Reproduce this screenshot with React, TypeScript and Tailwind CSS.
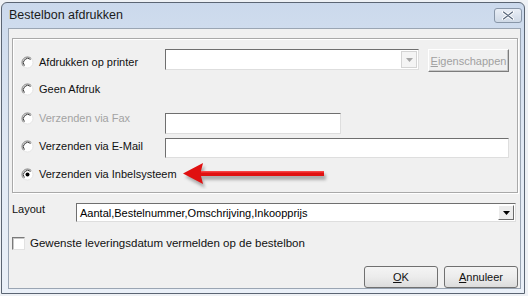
import React from 'react';

const font = "font-['Liberation_Sans',Arial,sans-serif]";
const sunken = 'border border-t-[#6f6f6f] border-l-[#6f6f6f] border-r-[#dedede] border-b-[#dedede] bg-white';

function Radio({ checked = false }: { checked?: boolean }) {
  return (
    <svg width="13" height="13" viewBox="0 0 13 13" className="shrink-0">
      <circle cx="6.5" cy="6.5" r="5.5" fill="#ffffff" />
      <path d="M2.6 10.4 A5.5 5.5 0 0 1 10.4 2.6" stroke="#7a7a7a" strokeWidth="1" fill="none" />
      <path d="M3.4 9.6 A4.4 4.4 0 0 1 9.6 3.4" stroke="#3a3a3a" strokeWidth="1" fill="none" />
      <path d="M10.4 2.6 A5.5 5.5 0 0 1 2.6 10.4" stroke="#e4e4e4" strokeWidth="1" fill="none" />
      {checked && <circle cx="6.5" cy="6.5" r="2" fill="#000000" />}
    </svg>
  );
}

function RadioLabel({ label, checked, disabled }: { label: string; checked?: boolean; disabled?: boolean }) {
  return (
    <div className="flex items-center gap-[5px] h-[14px]">
      <Radio checked={checked} />
      <span className={`text-[11px] leading-[14px] whitespace-nowrap ${disabled ? 'text-[#a3a3a3]' : 'text-[#111]'}`}>{label}</span>
    </div>
  );
}

function Triangle({ color }: { color: string }) {
  return (
    <svg width="7" height="4" viewBox="0 0 7 4">
      <path d="M0 0 H7 L3.5 4 Z" fill={color} />
    </svg>
  );
}

export default function App() {
  return (
    <div className={`w-[528px] h-[296px] bg-[#eef1f5] overflow-hidden ${font}`}>
      <div className="ml-[1px] mt-[2px] w-[524px] h-[292px] border border-[#5b6573] rounded-t-[6px] bg-gradient-to-b from-[#cbd9ec] via-[#e1e9f4] to-[#eaf0f8] flex flex-col">
        {/* title bar */}
        <div className="h-[25px] shrink-0 flex items-start justify-between pl-[7px] pr-[2px]">
          <span className="text-[12.5px] text-[#1b1b1b] mt-[5px] leading-[15px]">Bestelbon afdrukken</span>
          <div className="w-[28px] h-[15px] mt-[5px] rounded-[3px] border border-[#8896a8] bg-gradient-to-b from-[#e9eef6] to-[#cfd9e6] flex items-center justify-center">
            <svg width="12" height="9" viewBox="0 0 12 9">
              <path d="M1.5 1 L10.5 8 M10.5 1 L1.5 8" stroke="#ffffff" strokeWidth="3" strokeLinecap="round" />
              <path d="M1.5 1 L10.5 8 M10.5 1 L1.5 8" stroke="#55657a" strokeWidth="1.2" strokeLinecap="round" />
            </svg>
          </div>
        </div>

        {/* client area */}
        <div className="flex flex-1 min-h-0 pl-[6px] pr-[3px] pb-[4px]">
          <div className="relative flex-1 border border-[#9aa5b3] bg-[#f0f0f0] flex flex-col pl-[3px] pr-[2px] pt-[9px]">
            {/* group box */}
            <div className="h-[155px] shrink-0 border border-[#a9a9a9] shadow-[inset_1px_1px_0_#ffffff,1px_1px_0_#ffffff] flex flex-col pt-[10px]">
              <div className="flex h-[27px] shrink-0">
                <div className="w-[152px] pl-[8px] pt-[6px]">
                  <RadioLabel label="Afdrukken op printer" />
                </div>
                <div className={`w-[254px] h-[21px] flex justify-end items-center pr-[1px] ${sunken}`}>
                  <div className="w-[16px] h-[17px] border border-[#d4d4d4] bg-[#f4f4f4] flex items-center justify-center">
                    <Triangle color="#a6a6a6" />
                  </div>
                </div>
                <div className="ml-[9px] w-[81px] h-[23px] border border-t-[#ffffff] border-l-[#ffffff] border-r-[#7c7c7c] border-b-[#7c7c7c] shadow-[inset_-1px_-1px_0_#c8c8c8] flex items-center justify-center">
                  <span className="text-[11px] leading-[14px] text-[#a0a0a0]"><span className="underline">E</span>igenschappen</span>
                </div>
              </div>

              <div className="flex h-[27px] shrink-0">
                <div className="w-[152px] pl-[8px] pt-[6px]">
                  <RadioLabel label="Geen Afdruk" />
                </div>
              </div>

              <div className="flex h-[35px] shrink-0">
                <div className="w-[152px] pl-[8px] pt-[8px]">
                  <RadioLabel label="Verzenden via Fax" disabled />
                </div>
                <div className={`mt-[10px] w-[176px] h-[21px] ${sunken}`} />
              </div>

              <div className="flex h-[28px] shrink-0">
                <div className="w-[152px] pl-[8px] pt-[1px]">
                  <RadioLabel label="Verzenden via E-Mail" />
                </div>
                <div className={`w-[344px] h-[20px] ${sunken}`} />
              </div>

              <div className="flex shrink-0">
                <div className="w-[152px] pl-[8px] pt-[1px]">
                  <RadioLabel label="Verzenden via Inbelsysteem" checked />
                </div>
              </div>
            </div>

            {/* layout row */}
            <div className="flex items-start mt-[10px] h-[19px] shrink-0">
              <span className="w-[64px] text-[11px] leading-[14px] text-[#111] mt-[-1px]">Layout</span>
              <div className={`w-[440px] h-[19px] flex items-center justify-between pl-[3px] pr-[1px] ${sunken}`}>
                <span className="text-[11px] text-[#000] leading-[14px]">Aantal,Bestelnummer,Omschrijving,Inkoopprijs</span>
                <div className="w-[16px] h-[15px] border border-t-[#ffffff] border-l-[#ffffff] border-r-[#6b6b6b] border-b-[#6b6b6b] bg-[#ececec] flex items-center justify-center">
                  <Triangle color="#000000" />
                </div>
              </div>
            </div>

            {/* checkbox row */}
            <div className="flex items-center h-[14px] mt-[14px] gap-[5px] shrink-0">
              <div className="w-[13px] h-[13px] border border-t-[#7a7a7a] border-l-[#7a7a7a] border-r-[#e2e2e2] border-b-[#e2e2e2] bg-white shadow-[inset_1px_1px_0_#c8c8c8]" />
              <span className="text-[11.5px] leading-[14px] text-[#111]">Gewenste leveringsdatum vermelden op de bestelbon</span>
            </div>

            {/* buttons */}
            <div className="flex justify-end gap-[6px] mt-[16px] shrink-0">
              <div className="w-[74px] h-[22px] rounded-[3px] border border-[#707070] bg-gradient-to-b from-[#f4f4f4] via-[#ececec] to-[#dcdcdc] flex items-center justify-center">
                <span className="text-[11px] leading-[14px] text-[#111]"><span className="underline">O</span>K</span>
              </div>
              <div className="w-[74px] h-[22px] rounded-[3px] border border-[#707070] bg-gradient-to-b from-[#f4f4f4] via-[#ececec] to-[#dcdcdc] flex items-center justify-center">
                <span className="text-[11px] leading-[14px] text-[#111]"><span className="underline">A</span>nnuleer</span>
              </div>
            </div>

            {/* red arrow callout */}
            <svg className="absolute left-[173px] top-[132px]" width="148" height="28" viewBox="0 0 148 28">
              <defs>
                <filter id="sh" x="-10%" y="-50%" width="120%" height="200%">
                  <feGaussianBlur stdDeviation="1.5" />
                </filter>
              </defs>
              <path d="M2 14 L22 3 L20 11 L143 11 L143 17 L20 17 L22 25 Z" fill="#6b6b6b" opacity="0.5" filter="url(#sh)" transform="translate(1 2)" />
              <path d="M1 12.5 L21 2 L19 10 L142 10 L142 15 L19 15 L21 23 Z" fill="#e01010" />
              <path d="M19 10 L142 10 L142 11.5 L19 11.5 Z" fill="#ff5a5a" opacity="0.7" />
            </svg>
          </div>
        </div>
      </div>
    </div>
  );
}
